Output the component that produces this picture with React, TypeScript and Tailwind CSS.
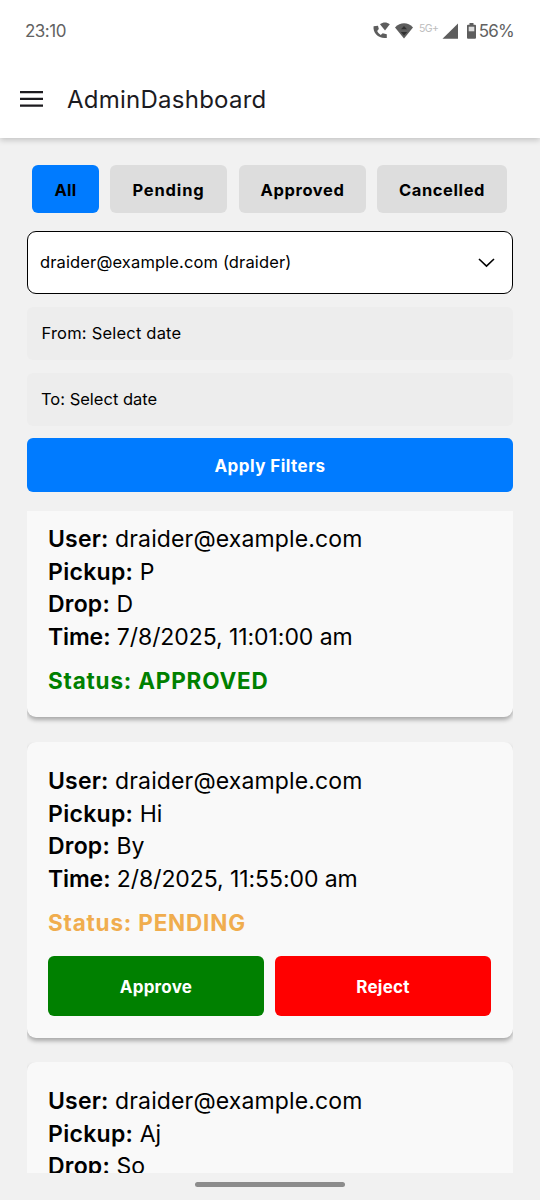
import type { ReactNode } from "react";

const filters = [
  { label: "All", box: "w-[67px] bg-[#007bff]", text: "tracking-[0.2px]" },
  { label: "Pending", box: "ml-[11px] w-[117px] bg-[#ddd]", text: "tracking-[0.85px]" },
  { label: "Approved", box: "ml-3 w-[127px] bg-[#ddd]", text: "tracking-[0.6px]" },
  { label: "Cancelled", box: "ml-[11px] w-[130px] bg-[#ddd]", text: "tracking-[0.6px]" },
];

function StatusIcons() {
  return (
    <svg width="106" height="24" viewBox="0 0 106 24" className="shrink-0" fill="#5d5d5d">
      <path d="M2.6 6.3c-1 6.9 5.4 12.9 13.2 11.6v-3.6l-4.1-1-2 1.7c-1.5-1-2.7-2.2-3.5-3.9l1.6-2-.8-3.3z" />
      <path d="M9 4.2c3.1-2.4 6.6-2.4 9.8 0L14 10.5z" />
      <path d="M24 7.5c5.4-5.6 12.8-5.6 18 0L33 18.5z" />
      <path d="M33 6l3 3.3h-6zM29.8 12h6.4L33 15.5z" fill="#303030" />
      <path d="M71.5 18.8L87 3.5v15.3z" />
      <path d="M98.5 3h4v1.7h1.5q1 0 1 1v12q0 1-1 1h-7q-1 0-1-1v-12q0-1 1-1h1.5z" />
      <path d="M97.7 6.7h5.6v4.6h-5.6z" fill="#ddd" />
      <text x="48" y="11.5" fontSize="10.5" fill="#bdbdbd" fontFamily="Inter, sans-serif" textLength="20">5G+</text>
    </svg>
  );
}

function Line({ label, children, labelClass = "tracking-[0.3px]", valueClass = "" }: {
  label: string;
  children: ReactNode;
  labelClass?: string;
  valueClass?: string;
}) {
  return (
    <p className="whitespace-nowrap">
      <span className={"font-semibold " + labelClass}>{label}:</span> <span className={valueClass}>{children}</span>
    </p>
  );
}

type Ride = { pickup: string; drop: string; time: string; status: string };

function RideCard({ ride, box }: { ride: Ride; box: string }) {
  const pending = ride.status === "PENDING";
  return (
    <article className={"shrink-0 rounded-[9px] bg-[#f9f9f9] px-[21px] pt-[23px] shadow-[0_3px_4px_rgba(0,0,0,0.3)] [clip-path:inset(0_0_-10px_0)] " + box}>
      <div className="text-[23px] leading-[32.5px]">
        <Line label="User" labelClass="tracking-[0.2px]" valueClass="tracking-[0.13px]">draider@example.com</Line>
        <Line label="Pickup">{ride.pickup}</Line>
        <Line label="Drop" labelClass="tracking-[0.2px]">{ride.drop}</Line>
        <Line label="Time" labelClass="tracking-[-0.1px]" valueClass="tracking-[-0.07px]">{ride.time}</Line>
      </div>
      <p className={"mt-3 text-[22.5px] leading-8 font-bold tracking-[0.8px] whitespace-nowrap " + (pending ? "text-[#f0ad4e]" : "text-[#008000]")}>
        Status: {ride.status}
      </p>
      {pending && (
        <div className="mt-[17px] flex gap-[11px] text-[17px] font-bold text-white">
          <button className="h-[60px] w-[216px] rounded-md bg-[#008000] pt-[4px] tracking-[0.25px]">Approve</button>
          <button className="h-[60px] w-[216px] rounded-md bg-[#ff0000] pt-[4px] tracking-[0.25px]">Reject</button>
        </div>
      )}
    </article>
  );
}

export default function App() {
  return (
    <div className="flex h-[1200px] w-[540px] flex-col overflow-hidden bg-[#f1f1f1] font-[Inter,sans-serif] text-black">
      <header className="z-10 h-[138px] shrink-0 bg-white shadow-[0_2px_6px_rgba(0,0,0,0.2)]">
        <div className="flex h-16 items-center justify-between pr-[26px] pl-[25px] text-[17px] text-[#626262]">
          <span className="tracking-[-0.5px]">23:10</span>
          <div className="flex items-center gap-[2px]">
            <StatusIcons />
            <span className="tracking-[-0.8px]">56%</span>
          </div>
        </div>
        <div className="flex h-[70px] items-center gap-6 pl-5">
          <svg width="23" height="16" viewBox="0 0 23 16" fill="#1c1b1f">
            <path d="M0 0h23v2.2H0zM0 6.8h23V9H0zM0 13.5h23v2.2H0z" />
          </svg>
          <h1 className="pt-px text-[24px] tracking-[0.25px] text-[#1c1b1f]">AdminDashboard</h1>
        </div>
      </header>

      <div className="shrink-0 px-[27px] pt-[27px]">
        <div className="flex pl-[5px]">
          {filters.map((f) => (
            <button key={f.label} className={"h-12 shrink-0 rounded-md pt-[2px] text-[16.5px] font-bold " + f.box}>
              <span className={f.text}>{f.label}</span>
            </button>
          ))}
        </div>
        <div className="mt-[18px] flex h-[63px] items-center justify-between rounded-[9px] border-[1.5px] border-black bg-white pr-[17px] pl-3 text-[16.5px]">
          <span className="tracking-[0.13px]">draider@example.com (draider)</span>
          <svg width="17" height="10" viewBox="0 0 17 10" fill="none" stroke="black" strokeWidth="1.6">
            <path d="M1 1l7.5 7.2L16 1" />
          </svg>
        </div>
        <div className="mt-[13px] flex h-[53px] items-center rounded-md bg-[#ededed] pl-[14.5px] text-[16.5px] tracking-[0.2px]">From: Select date</div>
        <div className="mt-[13px] flex h-[53px] items-center rounded-md bg-[#ededed] pl-[14px] text-[16.5px]">To: Select date</div>
        <button className="mt-3 h-[54px] w-full rounded-md bg-[#007bff] pt-[4px] text-[17px] font-bold tracking-[0.45px] text-white">Apply Filters</button>
      </div>

      <main className="mt-[19px] flex h-[662px] shrink-0 flex-col overflow-hidden px-[27px]">
        <div className="-mt-[11px] flex flex-col">
          <RideCard box="mb-[25px] h-[217px]" ride={{ pickup: "P", drop: "D", time: "7/8/2025, 11:01:00 am", status: "APPROVED" }} />
          <RideCard box="mb-[24px] h-[296px]" ride={{ pickup: "Hi", drop: "By", time: "2/8/2025, 11:55:00 am", status: "PENDING" }} />
          <RideCard box="h-[296px]" ride={{ pickup: "Aj", drop: "So", time: "2/8/2025, 11:50:00 am", status: "PENDING" }} />
        </div>
      </main>
      <div className="mt-[9px] h-[5px] w-[150px] shrink-0 self-center rounded-full bg-[#8c8c8c]" />
    </div>
  );
}
